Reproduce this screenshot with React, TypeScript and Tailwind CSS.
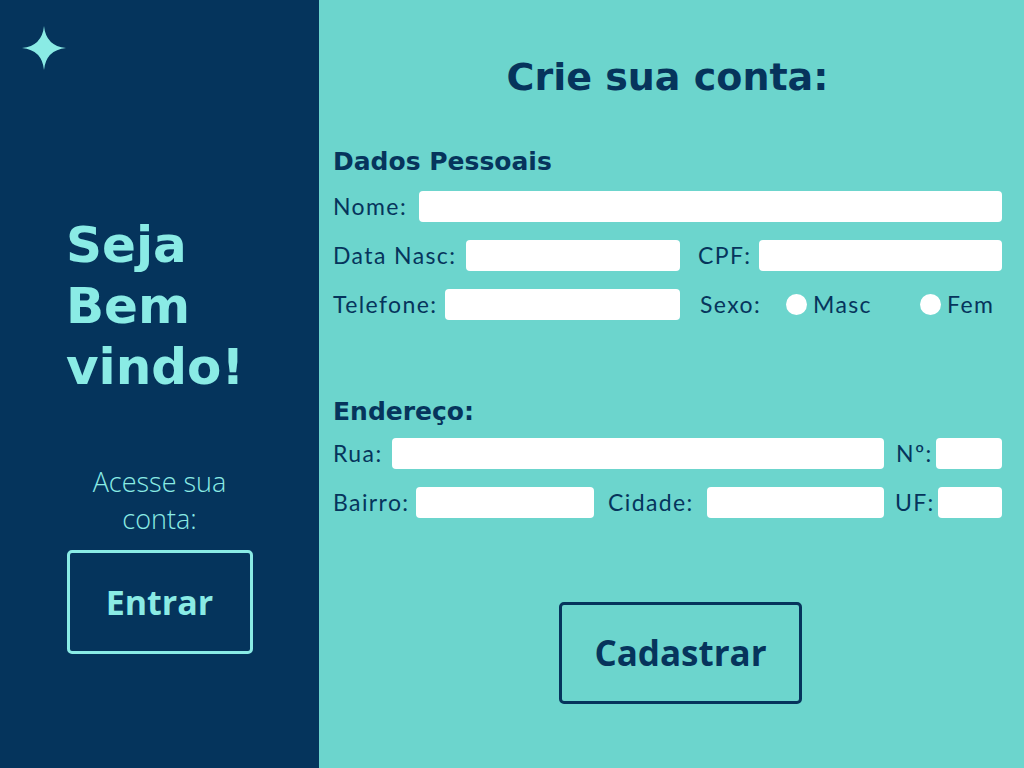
import React from 'react';

const head = { fontFamily: '"DejaVu Sans", Lato, sans-serif' };
const label = { fontFamily: 'Lato, "Noto Sans", sans-serif' };
const body = { fontFamily: '"Open Sans", "Noto Sans", sans-serif' };

function Field({ className = '' }: { className?: string }) {
  return <div className={`h-[31px] rounded-[4px] bg-white ${className}`} />;
}

function Label({ children }: { children: React.ReactNode }) {
  return (
    <span className="shrink-0 whitespace-nowrap text-[23px] leading-none tracking-[1.4px] text-[#06345c]" style={label}>
      {children}
    </span>
  );
}

function Radio({ text }: { text: string }) {
  return (
    <div className="flex items-center gap-[6px]">
      <span className="h-[21px] w-[21px] rounded-full bg-white" />
      <Label>{text}</Label>
    </div>
  );
}

export default function App() {
  return (
    <div className="flex h-[768px] w-[1024px] overflow-hidden" style={head}>
      <aside className="flex w-[319px] shrink-0 flex-col bg-[#05345c]">
        <svg className="ml-[22px] mt-[26px]" width="44" height="44" viewBox="0 0 44 44">
          <path d="M22 0 Q24 20 44 22 Q24 24 22 44 Q20 24 0 22 Q20 20 22 0 Z" fill="#8aebe5" />
        </svg>
        <h1 className="mt-[145px] pl-[66px] text-[50px] font-bold leading-[61px] text-[#8aebe5]">
          Seja
          <br />
          Bem
          <br />
          vindo!
        </h1>
        <p className="mt-[65px] text-center text-[27px] font-light leading-[37px] text-[#8aebe5]" style={body}>
          Acesse sua
          <br />
          conta:
        </p>
        <button
          className="mx-auto mt-[13px] flex h-[104px] w-[186px] items-center justify-center rounded-[5px] border-[3px] border-[#8aebe5] text-[34px] font-bold text-[#8aebe5]"
          style={body}
        >
          Entrar
        </button>
      </aside>

      <main className="flex flex-1 flex-col bg-[#6cd5cd] pl-[14px] pr-[22px] text-[#06345c]">
        <h2 className="mt-[53px] text-center text-[38px] font-bold leading-[48px]">Crie sua conta:</h2>

        <h3 className="mt-[46px] text-[25px] font-bold leading-[30px]">Dados Pessoais</h3>

        <div className="mt-[14px] flex h-[31px] items-center gap-[12px]">
          <Label>Nome:</Label>
          <Field className="flex-1" />
        </div>

        <div className="mt-[18px] flex h-[31px] items-center">
          <div className="flex w-[347px] items-center gap-[10px]">
            <Label>Data Nasc:</Label>
            <Field className="flex-1" />
          </div>
          <div className="ml-[18px] flex flex-1 items-center gap-[8px]">
            <Label>CPF:</Label>
            <Field className="flex-1" />
          </div>
        </div>

        <div className="mt-[18px] flex h-[31px] items-center">
          <div className="flex w-[347px] items-center gap-[8px]">
            <Label>Telefone:</Label>
            <Field className="flex-1" />
          </div>
          <div className="ml-[20px] flex items-center">
            <div className="flex w-[86px] items-center">
              <Label>Sexo:</Label>
            </div>
            <div className="flex w-[134px] items-center">
              <Radio text="Masc" />
            </div>
            <Radio text="Fem" />
          </div>
        </div>

        <h3 className="mt-[77px] text-[25px] font-bold leading-[30px]">Endereço:</h3>

        <div className="mt-[11px] flex h-[31px] items-center">
          <div className="flex w-[551px] items-center gap-[9px]">
            <Label>Rua:</Label>
            <Field className="flex-1" />
          </div>
          <div className="ml-[12px] flex flex-1 items-center gap-[3px]">
            <Label>Nº:</Label>
            <Field className="flex-1" />
          </div>
        </div>

        <div className="mt-[18px] flex h-[31px] items-center">
          <div className="flex w-[261px] items-center gap-[6px]">
            <Label>Bairro:</Label>
            <Field className="flex-1" />
          </div>
          <div className="ml-[14px] flex w-[276px] items-center gap-[13px]">
            <Label>Cidade:</Label>
            <Field className="flex-1" />
          </div>
          <div className="ml-[11px] flex flex-1 items-center gap-[3px]">
            <Label>UF:</Label>
            <Field className="flex-1" />
          </div>
        </div>

        <button
          className="ml-[226px] mt-[84px] flex h-[102px] w-[243px] items-center justify-center rounded-[5px] border-[3px] border-[#06345c] text-[35px] font-bold text-[#06345c]"
          style={body}
        >
          Cadastrar
        </button>
      </main>
    </div>
  );
}
